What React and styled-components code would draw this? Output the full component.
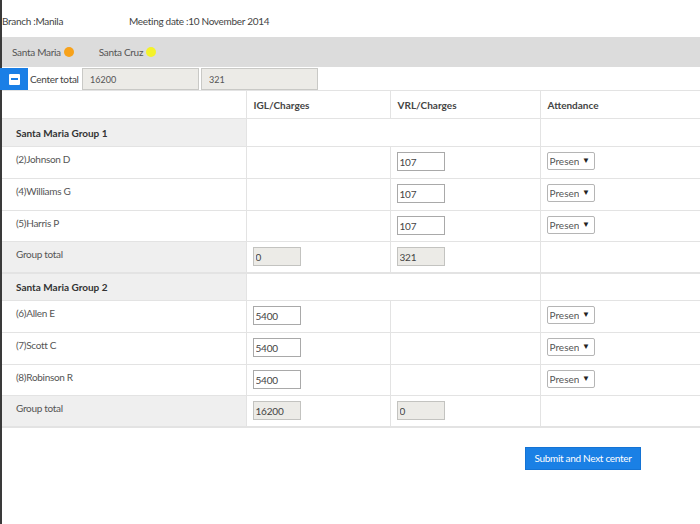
import React from "react";
import styled, { createGlobalStyle } from "styled-components";

const GlobalStyle = createGlobalStyle`
  html, body { margin: 0; padding: 0; background: #fff; }
  body { font-family: Lato, "Open Sans", sans-serif; font-size: 10px; color: #444; letter-spacing: -0.3px; }
  * { box-sizing: border-box; }
`;

const Page = styled.div`
  border-left: 2px solid #3a3a3a;
  min-height: 524px;
  width: 700px;
`;

const InfoBar = styled.div`
  height: 37px;
  display: flex;
  align-items: center;
  padding-top: 4px;
  color: #444;
`;

const InfoItem = styled.span`
  width: ${(p) => p.$w || "auto"};
  white-space: nowrap;
`;

const TabBar = styled.div`
  height: 30px;
  background: #dcdcdc;
  display: flex;
  align-items: center;
  padding-left: 10px;
  gap: 25px;
`;

const Tab = styled.span`
  display: flex;
  align-items: center;
  gap: 3px;
  color: #555;
`;

const Dot = styled.span`
  width: 10px;
  height: 10px;
  border-radius: 50%;
  background: ${(p) => p.$color};
`;

const TotalBar = styled.div`
  height: 23px;
  display: flex;
  align-items: center;
  padding-top: 1px;
  margin-left: -2px;
`;

const Toggle = styled.button`
  width: 28px;
  height: 22px;
  border: none;
  background: #1a7fe6;
  display: flex;
  align-items: center;
  justify-content: center;
  padding: 0;
  margin: 0;
`;

const MinusBox = styled.span`
  width: 11px;
  height: 11px;
  background: #fff;
  border-radius: 1px;
  display: flex;
  align-items: center;
  justify-content: center;
  &::after {
    content: "";
    width: 7px;
    height: 2px;
    background: #1a7fe6;
  }
`;

const TotalLabel = styled.span`
  width: 54px;
  padding-left: 2px;
  color: #444;
  white-space: nowrap;
`;

const TotalField = styled.input`
  width: 117px;
  height: 22px;
  margin-right: 2px;
  background: #ecebe7;
  border: 1px solid #c9c9c6;
  font-family: inherit;
  font-size: 9px;
  color: #555;
  padding: 0 7px;
`;

const Table = styled.table`
  width: 698px;
  border-collapse: collapse;
  table-layout: fixed;
  border-top: 1px solid #e3e3e3;
`;

const Th = styled.th`
  text-align: left;
  font-weight: 700;
  letter-spacing: 0;
  color: #444;
  height: 28px;
  padding: 0 7px;
  border-bottom: 1px solid #e3e3e3;
  border-right: 1px solid #e3e3e3;
  font-size: 10px;
`;

const Row = styled.tr`
  height: ${(p) => p.$h};
  border-bottom: ${(p) => (p.$thick ? "2px solid #e3e3e3" : "1px solid #e3e3e3")};
`;

const Td = styled.td`
  padding: ${(p) => (p.$label ? "5px 14px 0" : "5px 6px 0")};
  vertical-align: ${(p) => (p.$middle ? "middle" : "top")};
  background: ${(p) => (p.$shade ? "#efefef" : "#fff")};
  border-right: 1px solid #e3e3e3;
  color: ${(p) => (p.$bold ? "#333" : "#555")};
  font-weight: ${(p) => (p.$bold ? 700 : 400)};
  letter-spacing: ${(p) => (p.$bold ? "0" : "-0.3px")};
  line-height: 14px;
  ${(p) => p.$middle && "padding-top: 0;"}
`;

const NumInput = styled.input`
  width: 48px;
  height: 19px;
  border: 1px solid ${(p) => (p.$disabled ? "#c3c3c0" : "#a9a9a9")};
  background: ${(p) => (p.$disabled ? "#ecebe7" : "#fff")};
  font-family: inherit;
  font-size: 10px;
  letter-spacing: -0.2px;
  color: #444;
  padding: 0 2px;
  display: block;
`;

const SelectWrap = styled.span`
  position: relative;
  display: block;
  width: 48px;
  height: 18px;
`;

const Select = styled.select`
  appearance: none;
  width: 48px;
  height: 18px;
  border: 1px solid #b5b5b5;
  border-radius: 2px;
  background: #fff;
  font-family: inherit;
  font-size: 10px;
  letter-spacing: 0;
  color: #555;
  padding: 0 15px 0 2px;
  display: block;
`;

const Arrow = styled.span`
  position: absolute;
  right: 5px;
  top: 3px;
  font-size: 8px;
  line-height: 10px;
  color: #222;
  pointer-events: none;
`;

const Footer = styled.div`
  display: flex;
  justify-content: flex-end;
  padding: 19px 59px 0 0;
`;

const SubmitButton = styled.button`
  width: 116px;
  height: 23px;
  background: #1a80e5;
  color: #fff;
  border: 1px solid #1473d4;
  font-family: inherit;
  font-size: 10px;
  letter-spacing: -0.3px;
  padding: 0;
`;

const groups = [
  {
    name: "Santa Maria Group 1",
    members: ["(2)Johnson D", "(4)Williams G", "(5)Harris P"],
    igl: null,
    vrl: "107",
    totals: ["0", "321"],
  },
  {
    name: "Santa Maria Group 2",
    members: ["(6)Allen E", "(7)Scott C", "(8)Robinson R"],
    igl: "5400",
    vrl: null,
    totals: ["16200", "0"],
  },
];

const memberHeights = ["32px", "32px", "31px"];

function AttendanceSelect() {
  return (
    <SelectWrap>
      <Select defaultValue="Present">
        <option>Present</option>
        <option>Absent</option>
      </Select>
      <Arrow>▼</Arrow>
    </SelectWrap>
  );
}

export default function App() {
  return (
    <Page>
      <GlobalStyle />
      <InfoBar>
        <InfoItem $w="127px">Branch :Manila</InfoItem>
        <InfoItem>Meeting date :10 November 2014</InfoItem>
      </InfoBar>
      <TabBar>
        <Tab>
          Santa Maria <Dot $color="#f7a21b" />
        </Tab>
        <Tab>
          Santa Cruz <Dot $color="#f4f22a" />
        </Tab>
      </TabBar>
      <TotalBar>
        <Toggle aria-label="collapse">
          <MinusBox />
        </Toggle>
        <TotalLabel>Center total</TotalLabel>
        <TotalField readOnly value="16200" />
        <TotalField readOnly value="321" />
      </TotalBar>
      <Table>
        <colgroup>
          <col style={{ width: 244 }} />
          <col style={{ width: 144 }} />
          <col style={{ width: 150 }} />
          <col style={{ width: 160 }} />
        </colgroup>
        <thead>
          <tr>
            <Th></Th>
            <Th>IGL/Charges</Th>
            <Th>VRL/Charges</Th>
            <Th>Attendance</Th>
          </tr>
        </thead>
        <tbody>
          {groups.map((g) => (
            <React.Fragment key={g.name}>
              <Row $h="28px">
                <Td $shade $bold $label $middle>
                  {g.name}
                </Td>
                <Td colSpan={2}></Td>
                <Td></Td>
              </Row>
              {g.members.map((m, i) => (
                <Row key={m} $h={memberHeights[i]}>
                  <Td $label>{m}</Td>
                  <Td>{g.igl && <NumInput defaultValue={g.igl} />}</Td>
                  <Td>{g.vrl && <NumInput defaultValue={g.vrl} />}</Td>
                  <Td>
                    <AttendanceSelect />
                  </Td>
                </Row>
              ))}
              <Row $thick $h="31px">
                <Td $shade $label>
                  Group total
                </Td>
                <Td>
                  <NumInput $disabled readOnly value={g.totals[0]} />
                </Td>
                <Td>
                  <NumInput $disabled readOnly value={g.totals[1]} />
                </Td>
                <Td></Td>
              </Row>
            </React.Fragment>
          ))}
        </tbody>
      </Table>
      <Footer>
        <SubmitButton>Submit and Next center</SubmitButton>
      </Footer>
    </Page>
  );
}
